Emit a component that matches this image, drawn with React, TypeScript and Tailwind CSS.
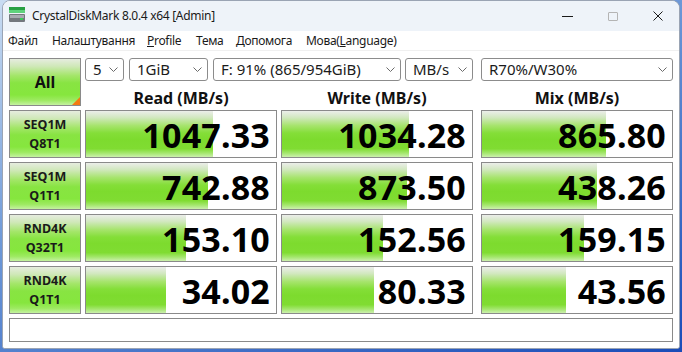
import React from "react";

const rows = [
  { l1: "SEQ1M", l2: "Q8T1", vals: [["1047.33", 127], ["1034.28", 127], ["865.80", 124]] },
  { l1: "SEQ1M", l2: "Q1T1", vals: [["742.88", 122], ["873.50", 125], ["438.26", 115]] },
  { l1: "RND4K", l2: "Q32T1", vals: [["153.10", 100], ["152.56", 101], ["159.15", 102]] },
  { l1: "RND4K", l2: "Q1T1", vals: [["34.02", 80], ["80.33", 92], ["43.56", 84]] },
] as const;

const green =
  "bg-[linear-gradient(to_bottom,#eceeea_0%,#d2e8c0_14%,#a6e46c_32%,#84de38_48%,#7ddb2e_62%,#80dc32_82%,#a2e66a_91%,#ccf0ae_100%)]";
const btnGreen =
  "bg-[linear-gradient(to_bottom,#e6ecdf_0%,#cfe8b8_16%,#a4e66a_36%,#88e442_52%,#86e63e_78%,#9eea62_90%,#c4f2a0_100%)]";

function Chevron() {
  return (
    <svg width="9" height="5" viewBox="0 0 9 5" className="shrink-0">
      <polyline points="0.5,0.5 4.5,4.5 8.5,0.5" fill="none" stroke="#6a6a6a" strokeWidth="1" />
    </svg>
  );
}

function Select({ w, text, ml }: { w: string; text: string; ml: string }) {
  return (
    <div
      className={`${w} ${ml} h-[23px] border border-[#8c8c8c] rounded-[3px] bg-white flex items-center pl-[7px] pr-[5px] justify-between text-[15px] text-[#1b1b1b] leading-none`}
    >
      <span className="whitespace-nowrap">{text}</span>
      <Chevron />
    </div>
  );
}

function Cell({ v, w, ml }: { v: string; w: number; ml: string }) {
  return (
    <div className={`${ml} w-[192px] h-[48px] border border-[#8a8a8a] bg-white flex relative`}>
      <div className={`${green} h-full`} style={{ width: w }} />
      <div className="absolute inset-0 flex items-center justify-end pr-[6px] pt-[2px] text-[34px] font-bold leading-none text-black tracking-[0.2px]">
        {v}
      </div>
    </div>
  );
}

export default function App() {
  return (
    <div
      className="w-[682px] h-[352px] bg-[linear-gradient(160deg,#c9dcf2_0%,#6f9ad8_40%,#1a4cb8_100%)] pl-[2px] pr-[2px] pb-[3px]"
      style={{ fontFamily: '"Noto Sans", "Open Sans", sans-serif' }}
    >
      <div className="w-[678px] h-[349px] border border-[#9aa4b4] rounded-t-[8px] rounded-b-[3px] overflow-hidden bg-white flex flex-col">
        {/* Title bar */}
        <div className="h-[30px] bg-[#eef3f9] flex items-center shrink-0">
          <svg width="16" height="15" viewBox="0 0 16 15" className="ml-[6px] mt-[-3px]">
            <rect x="0" y="0" width="16" height="3" fill="#27a043" />
            <rect x="0" y="3" width="16" height="3" fill="#5ed27c" />
            <rect x="0" y="7" width="16" height="8" rx="1" fill="#73787e" />
            <rect x="1" y="8" width="14" height="3" fill="#a7abb1" />
            <rect x="11" y="11" width="3" height="2" fill="#38cc58" />
          </svg>
          <span className="ml-[7px] text-[12px] tracking-[-0.3px] text-[#1a1a1a] whitespace-nowrap">
            CrystalDiskMark 8.0.4 x64 [Admin]
          </span>
          <div className="ml-auto flex items-center gap-[35px] pr-[16px]">
            <div className="w-[11px] h-[1px] bg-[#1a1a1a]" />
            <div className="w-[10px] h-[9px] border border-[#b4b4b4] rounded-[1px]" />
            <svg width="10" height="10" viewBox="0 0 10 10">
              <path d="M0.5 0.5 L9.5 9.5 M9.5 0.5 L0.5 9.5" stroke="#1a1a1a" strokeWidth="1" />
            </svg>
          </div>
        </div>
        {/* Menu bar */}
        <div className="h-[20px] bg-white flex items-center pl-[5px] text-[12px] tracking-[-0.3px] text-[#1a1a1a] border-b border-[#f0f0f0] shrink-0">
          <span className="w-[44px]">Файл</span>
          <span className="w-[95px]">Налаштування</span>
          <span className="w-[49px]">
            <u>P</u>rofile
          </span>
          <span className="w-[40px]">Тема</span>
          <span className="w-[70px]">Допомога</span>
          <span>
            Мова(<u>L</u>anguage)
          </span>
        </div>
        {/* Content */}
        <div className="flex-1 bg-white pl-[6px] pt-[7px] flex flex-col gap-[4px]">
          <div className="flex">
            <div
              className={`${btnGreen} w-[72px] h-[48px] border border-[#8a8a8a] relative flex items-center justify-center text-[16px] font-bold text-[#111] leading-none`}
            >
              All
              <svg width="8" height="8" viewBox="0 0 8 8" className="absolute right-0 bottom-0">
                <polygon points="8,0 8,8 0,8" fill="#f57a10" />
              </svg>
            </div>
            <div className="ml-[4px] w-[588px] flex flex-col">
              <div className="flex">
                <Select w="w-[39px]" ml="" text="5" />
                <Select w="w-[79px]" ml="ml-[5px]" text="1GiB" />
                <Select w="w-[188px]" ml="ml-[5px]" text="F: 91% (865/954GiB)" />
                <Select w="w-[68px]" ml="ml-[4px]" text="MB/s" />
                <Select w="w-[192px]" ml="ml-[8px]" text="R70%/W30%" />
              </div>
              <div className="flex h-[25px] items-end text-[16px] font-bold leading-none text-[#111]">
                <div className="w-[192px] text-center">Read (MB/s)</div>
                <div className="ml-[4px] w-[192px] text-center">Write (MB/s)</div>
                <div className="ml-[8px] w-[192px] text-center">Mix (MB/s)</div>
              </div>
            </div>
          </div>
          {rows.map((r, i) => (
            <div key={i} className="flex">
              <div
                className={`${btnGreen} w-[72px] h-[48px] border border-[#8a8a8a] flex flex-col items-center justify-center text-[12.5px] font-bold leading-[19.5px] text-[#1a1a1a]`}
              >
                <span>{r.l1}</span>
                <span>{r.l2}</span>
              </div>
              <Cell v={r.vals[0][0]} w={r.vals[0][1]} ml="ml-[4px]" />
              <Cell v={r.vals[1][0]} w={r.vals[1][1]} ml="ml-[4px]" />
              <Cell v={r.vals[2][0]} w={r.vals[2][1]} ml="ml-[8px]" />
            </div>
          ))}
          <div className="w-[664px] h-[24px] border border-[#8a8a8a] bg-white" />
        </div>
      </div>
    </div>
  );
}
